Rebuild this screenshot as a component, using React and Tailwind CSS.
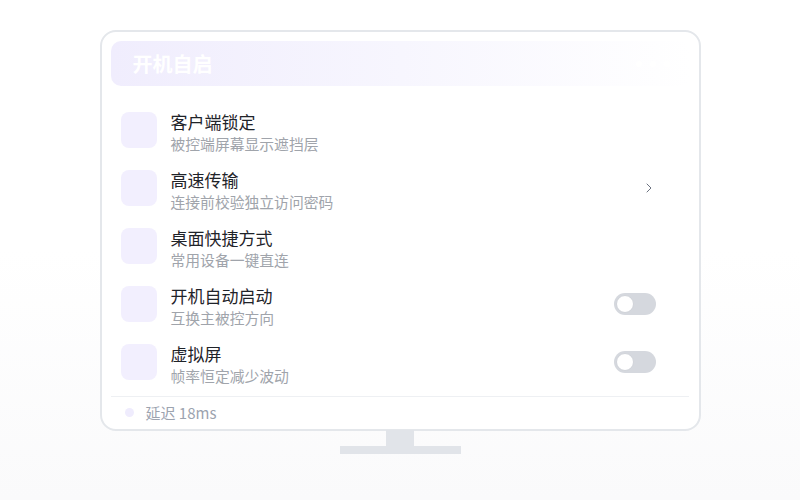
import { ChevronRight } from 'lucide-react'

const items = [
  { title: '客户端锁定', desc: '被控端屏幕显示遮挡层', action: null },
  { title: '高速传输', desc: '连接前校验独立访问密码', action: 'chevron' },
  { title: '桌面快捷方式', desc: '常用设备一键直连', action: null },
  { title: '开机自动启动', desc: '互换主被控方向', action: 'toggle' },
  { title: '虚拟屏', desc: '帧率恒定减少波动', action: 'toggle' },
]

function Toggle() {
  return (
    <div className="w-[42px] h-[22px] rounded-full bg-[#d5d8de] flex items-center p-[2px]">
      <div className="w-[18px] h-[18px] rounded-full bg-white border border-[#d0d3d9]" />
    </div>
  )
}

export default function App() {
  return (
    <div
      className="w-[800px] h-[500px] bg-gradient-to-b from-white via-white to-[#fafafb] flex flex-col items-center pt-[30px]"
      style={{ fontFamily: '"Noto Sans CJK SC", "Noto Sans", sans-serif' }}
    >
      <div className="w-[601px] h-[401px] border-2 border-[#e4e7eb] rounded-[16px] bg-white px-[9px] pt-[9px] flex flex-col">
        <div className="h-[45px] rounded-[10px] bg-gradient-to-r from-[#f0edfd] via-[#f7f6fe] to-white flex items-center justify-between pl-[22px] pr-[20px]">
          <span className="text-white text-[20px] font-semibold leading-none">开机自启</span>
          <div className="flex items-center gap-[8px]">
            <div className="w-[6px] h-[6px] rounded-full bg-white" />
            <div className="w-[6px] h-[6px] rounded-full bg-white" />
            <div className="w-[6px] h-[6px] rounded-full bg-white" />
          </div>
        </div>

        <div className="mt-[15px] flex flex-col">
          {items.map((item, i) => (
            <div key={i} className="h-[58px] flex items-center pl-[10px] pr-[34px]">
              <div className="w-[36px] h-[36px] rounded-[8px] bg-[#f2effe] shrink-0" />
              <div className="ml-[14px] flex flex-col gap-[1px] pt-[3px]">
                <span className="text-[17px] leading-[22px] text-[#1f2329]">{item.title}</span>
                <span className="text-[14.8px] leading-[19px] text-[#a0a4ab]">{item.desc}</span>
              </div>
              <div className="ml-auto">
                {item.action === 'toggle' && <Toggle />}
                {item.action === 'chevron' && (
                  <ChevronRight size={16} strokeWidth={1.5} className="text-[#6b7280] -mr-[1px]" />
                )}
              </div>
            </div>
          ))}
        </div>

        <div className="mt-[5px] h-px bg-[#eef0f3] mr-[1px]" />
        <div className="flex-1 flex items-center pl-[14px] pb-[2px]">
          <div className="w-[9px] h-[9px] rounded-full bg-[#efecfd]" />
          <span className="ml-[12px] text-[15px] text-[#9ca3af] leading-none">延迟 18ms</span>
        </div>
      </div>

      <div className="w-[28px] h-[16px] bg-[#e1e4e9] -mt-px" />
      <div className="w-[121px] h-[8px] bg-[#e1e4e9]" />
    </div>
  )
}
